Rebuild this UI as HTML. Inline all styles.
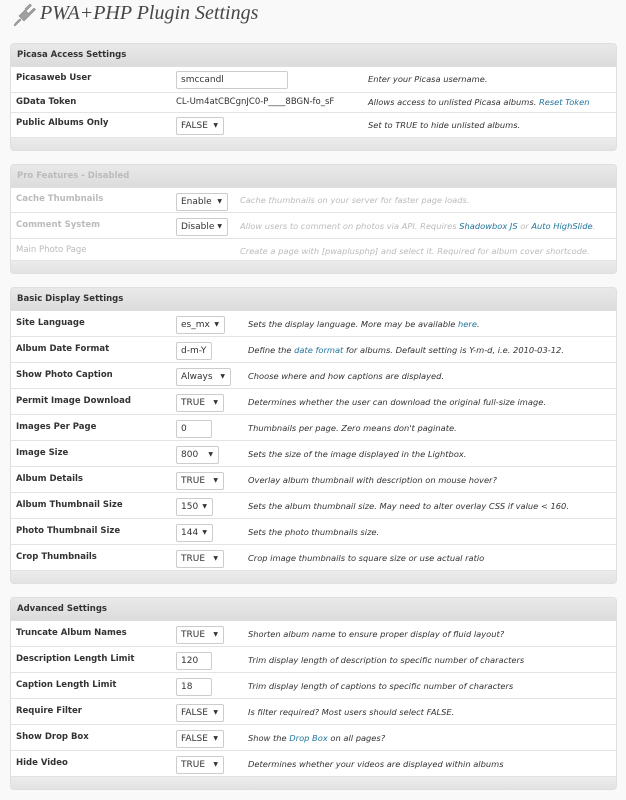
<!DOCTYPE html>
<html><head><meta charset="utf-8">
<style>
*{margin:0;padding:0;box-sizing:border-box}
body{width:626px;height:800px;background:#f9f9f9;font-family:"DejaVu Sans","Liberation Sans",sans-serif;position:relative;overflow:hidden;color:#333}
h1{position:absolute;left:40px;top:2px;font:italic 20px "Liberation Serif",serif;color:#464646;font-weight:normal}
.panel{position:absolute;left:10px;width:607px;border:1px solid #dfdfdf;border-radius:4px;background:#ececec;overflow:hidden}
.hd{height:23px;background:linear-gradient(#e9e9e9,#dcdcdc);font-weight:bold;font-size:8.5px;padding-left:6px;line-height:22px;color:#333;border-bottom:1px solid #dfdfdf}
.row{background:#fff;border-bottom:1px solid #e3e3e3;position:relative}
.row .l{position:absolute;left:5px;font-weight:bold;font-size:8.5px}
.row .c{position:absolute;left:165px;font-size:8.5px}
.row .d{position:absolute;font-style:italic;font-size:8.3px;color:#333}
.ft{height:13px;background:linear-gradient(#ececec,#e2e2e2)}
a{color:#21759b;text-decoration:none}
.sel,.inp{display:inline-block;border:1px solid #ccc;background:#fff;height:18px;line-height:16px;font-size:9px;padding-left:4px;border-radius:2px;color:#333;position:relative}
.sel:after{content:"\25BC";position:absolute;right:5px;font-size:6px;top:0}
.dis .l,.dis .d{color:#bbb}
.dis .hd{color:#bbb}
</style></head><body>
<svg style="position:absolute;left:12px;top:3px" width="24" height="24" viewBox="0 0 24 24"><g fill="#a0a0a0" stroke="#888" stroke-width="0.6"><path d="M2 22 Q5 18 8 16 L9 17 Q6 20 3 23Z"/><path d="M7 13 L13 7 L18 12 L12 18Z"/><path d="M13 6 L18 1 L19.5 2.5 L14.5 7.5Z"/><path d="M17 10 L22 5 L23.5 6.5 L18.5 11.5Z"/></g></svg>
<h1>PWA+PHP Plugin Settings</h1>

<div class="panel" style="top:43px;height:108px">
<div class="hd">Picasa Access Settings</div>
<div class="row" style="height:26px"><span class="l" style="top:6px">Picasaweb User</span><span class="c" style="top:4px"><span class="inp" style="width:112px">smccandl</span></span><span class="d" style="left:357px;top:7px">Enter your Picasa username.</span></div>
<div class="row" style="height:20px"><span class="l" style="top:4px">GData Token</span><span class="c" style="top:4px">CL-Um4atCBCgnJC0-P____8BGN-fo_sF</span><span class="d" style="left:357px;top:4px">Allows access to unlisted Picasa albums. <a>Reset Token</a></span></div>
<div class="row" style="height:25px"><span class="l" style="top:5px">Public Albums Only</span><span class="c" style="top:4px"><span class="sel" style="width:48px">FALSE</span></span><span class="d" style="left:357px;top:7px">Set to TRUE to hide unlisted albums.</span></div>
<div class="ft"></div></div>

<div class="panel dis" style="top:164px;height:110px">
<div class="hd">Pro Features - Disabled</div>
<div class="row" style="height:25px"><span class="l" style="top:6px">Cache Thumbnails</span><span class="c" style="top:5px"><span class="sel" style="width:52px">Enable</span></span><span class="d" style="left:229px;top:7px">Cache thumbnails on your server for faster page loads.</span></div>
<div class="row" style="height:26px"><span class="l" style="top:7px">Comment System</span><span class="c" style="top:5px"><span class="sel" style="width:52px">Disable</span></span><span class="d" style="left:229px;top:8px">Allow users to comment on photos via API. Requires <a>Shadowbox JS</a> or <a>Auto HighSlide</a>.</span></div>
<div class="row" style="height:22px"><span class="l" style="top:6px;font-weight:normal">Main Photo Page</span><span class="d" style="left:229px;top:7px">Create a page with [pwaplusphp] and select it. Required for album cover shortcode.</span></div>
<div class="ft"></div></div>

<div class="panel" style="top:287px;height:297px">
<div class="hd">Basic Display Settings</div>
<div class="row" style="height:26px"><span class="l" style="top:7px">Site Language</span><span class="c" style="top:5px"><span class="sel" style="width:49px">es_mx</span></span><span class="d" style="left:237px;top:8px">Sets the display language. More may be available <a>here</a>.</span></div>
<div class="row" style="height:26px"><span class="l" style="top:7px">Album Date Format</span><span class="c" style="top:5px"><span class="inp" style="width:36px">d-m-Y</span></span><span class="d" style="left:237px;top:8px">Define the <a>date format</a> for albums. Default setting is Y-m-d, i.e. 2010-03-12.</span></div>
<div class="row" style="height:26px"><span class="l" style="top:7px">Show Photo Caption</span><span class="c" style="top:5px"><span class="sel" style="width:55px">Always</span></span><span class="d" style="left:237px;top:8px">Choose where and how captions are displayed.</span></div>
<div class="row" style="height:26px"><span class="l" style="top:7px">Permit Image Download</span><span class="c" style="top:5px"><span class="sel" style="width:48px">TRUE</span></span><span class="d" style="left:237px;top:8px">Determines whether the user can download the original full-size image.</span></div>
<div class="row" style="height:26px"><span class="l" style="top:7px">Images Per Page</span><span class="c" style="top:5px"><span class="inp" style="width:36px">0</span></span><span class="d" style="left:237px;top:8px">Thumbnails per page. Zero means don't paginate.</span></div>
<div class="row" style="height:26px"><span class="l" style="top:7px">Image Size</span><span class="c" style="top:5px"><span class="sel" style="width:43px">800</span></span><span class="d" style="left:237px;top:8px">Sets the size of the image displayed in the Lightbox.</span></div>
<div class="row" style="height:26px"><span class="l" style="top:7px">Album Details</span><span class="c" style="top:5px"><span class="sel" style="width:48px">TRUE</span></span><span class="d" style="left:237px;top:8px">Overlay album thumbnail with description on mouse hover?</span></div>
<div class="row" style="height:26px"><span class="l" style="top:7px">Album Thumbnail Size</span><span class="c" style="top:5px"><span class="sel" style="width:37px">150</span></span><span class="d" style="left:237px;top:8px">Sets the album thumbnail size. May need to alter overlay CSS if value &lt; 160.</span></div>
<div class="row" style="height:26px"><span class="l" style="top:7px">Photo Thumbnail Size</span><span class="c" style="top:5px"><span class="sel" style="width:37px">144</span></span><span class="d" style="left:237px;top:8px">Sets the photo thumbnails size.</span></div>
<div class="row" style="height:26px"><span class="l" style="top:7px">Crop Thumbnails</span><span class="c" style="top:5px"><span class="sel" style="width:48px">TRUE</span></span><span class="d" style="left:237px;top:8px">Crop image thumbnails to square size or use actual ratio</span></div>
<div class="ft"></div></div>

<div class="panel" style="top:597px;height:193px">
<div class="hd">Advanced Settings</div>
<div class="row" style="height:26px"><span class="l" style="top:7px">Truncate Album Names</span><span class="c" style="top:5px"><span class="sel" style="width:48px">TRUE</span></span><span class="d" style="left:237px;top:8px">Shorten album name to ensure proper display of fluid layout?</span></div>
<div class="row" style="height:26px"><span class="l" style="top:7px">Description Length Limit</span><span class="c" style="top:5px"><span class="inp" style="width:36px">120</span></span><span class="d" style="left:237px;top:8px">Trim display length of description to specific number of characters</span></div>
<div class="row" style="height:26px"><span class="l" style="top:7px">Caption Length Limit</span><span class="c" style="top:5px"><span class="inp" style="width:36px">18</span></span><span class="d" style="left:237px;top:8px">Trim display length of captions to specific number of characters</span></div>
<div class="row" style="height:26px"><span class="l" style="top:7px">Require Filter</span><span class="c" style="top:5px"><span class="sel" style="width:48px">FALSE</span></span><span class="d" style="left:237px;top:8px">Is filter required? Most users should select FALSE.</span></div>
<div class="row" style="height:26px"><span class="l" style="top:7px">Show Drop Box</span><span class="c" style="top:5px"><span class="sel" style="width:48px">FALSE</span></span><span class="d" style="left:237px;top:8px">Show the <a>Drop Box</a> on all pages?</span></div>
<div class="row" style="height:26px"><span class="l" style="top:7px">Hide Video</span><span class="c" style="top:5px"><span class="sel" style="width:48px">TRUE</span></span><span class="d" style="left:237px;top:8px">Determines whether your videos are displayed within albums</span></div>
<div class="ft"></div></div>
</body></html>
